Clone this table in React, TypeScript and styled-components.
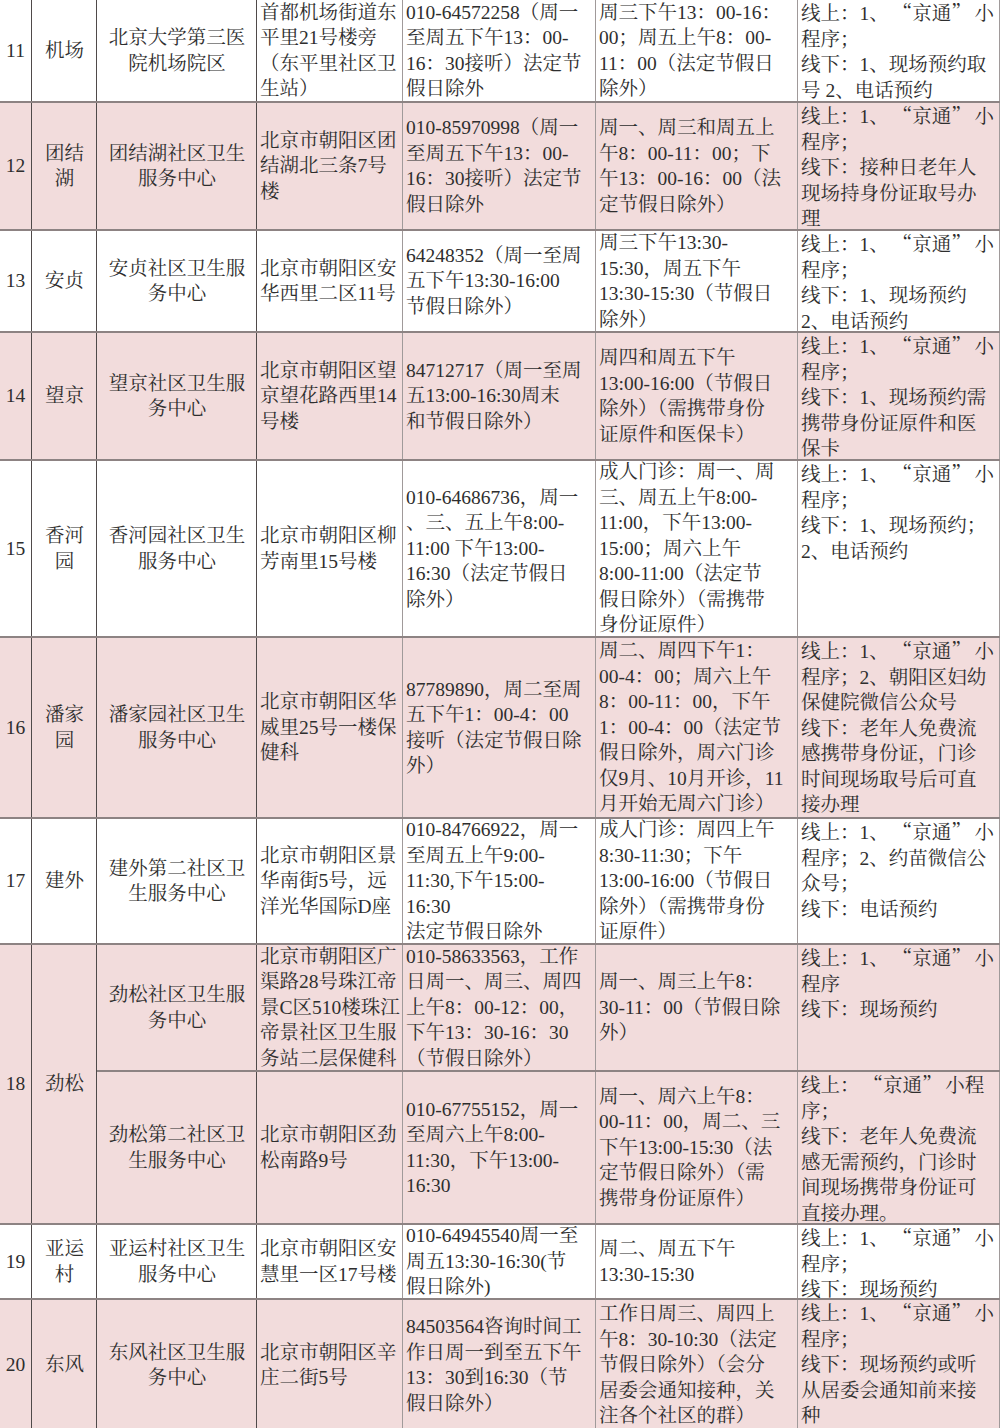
import React from 'react';
import styled, { createGlobalStyle } from 'styled-components';

const GlobalStyle = createGlobalStyle`
	html, body {
		margin: 0;
		padding: 0;
		background: #ffffff;
	}
	body {
		font-family: 'Liberation Serif', 'Noto Serif CJK SC', 'Noto Sans CJK SC', serif;
	}
`;

type Site = {
	name: string;
	addr: string;
	phone: string;
	hours: string;
	method: string;
};

type Area = {
	no: string;
	area: string;
	pink: boolean;
	sites: Site[];
};

// heights of each grid line (row 18 has two sub rows)
const rowHeights = [101, 126, 100, 126, 175, 179, 124, 125, 151, 73, 130];

const areas: Area[] = [
	{
		no: '11',
		area: '机场',
		pink: false,
		sites: [
			{
				name: '北京大学第三医\n院机场院区',
				addr: '首都机场街道东\n平里21号楼旁\n（东平里社区卫\n生站）',
				phone: '010-64572258（周一\n至周五下午13：00-\n16：30接听）法定节\n假日除外',
				hours: '周三下午13：00-16：\n00；周五上午8：00-\n11：00（法定节假日\n除外）',
				method: '线上：1、“京通”小\n程序；\n线下：1、现场预约取\n号 2、电话预约',
			},
		],
	},
	{
		no: '12',
		area: '团结\n湖',
		pink: true,
		sites: [
			{
				name: '团结湖社区卫生\n服务中心',
				addr: '北京市朝阳区团\n结湖北三条7号\n楼',
				phone: '010-85970998（周一\n至周五下午13：00-\n16：30接听）法定节\n假日除外',
				hours: '周一、周三和周五上\n午8：00-11：00；下\n午13：00-16：00（法\n定节假日除外）',
				method: '线上：1、“京通”小\n程序；\n线下：接种日老年人\n现场持身份证取号办\n理',
			},
		],
	},
	{
		no: '13',
		area: '安贞',
		pink: false,
		sites: [
			{
				name: '安贞社区卫生服\n务中心',
				addr: '北京市朝阳区安\n华西里二区11号',
				phone: '64248352（周一至周\n五下午13:30-16:00\n节假日除外）',
				hours: '周三下午13:30-\n15:30，周五下午\n13:30-15:30（节假日\n除外）',
				method: '线上：1、“京通”小\n程序；\n线下：1、现场预约\n2、电话预约',
			},
		],
	},
	{
		no: '14',
		area: '望京',
		pink: true,
		sites: [
			{
				name: '望京社区卫生服\n务中心',
				addr: '北京市朝阳区望\n京望花路西里14\n号楼',
				phone: '84712717（周一至周\n五13:00-16:30周末\n和节假日除外）',
				hours: '周四和周五下午\n13:00-16:00（节假日\n除外）（需携带身份\n证原件和医保卡）',
				method: '线上：1、“京通”小\n程序；\n线下：1、现场预约需\n携带身份证原件和医\n保卡',
			},
		],
	},
	{
		no: '15',
		area: '香河\n园',
		pink: false,
		sites: [
			{
				name: '香河园社区卫生\n服务中心',
				addr: '北京市朝阳区柳\n芳南里15号楼',
				phone: '010-64686736，周一\n、三、五上午8:00-\n11:00 下午13:00-\n16:30（法定节假日\n除外）',
				hours: '成人门诊：周一、周\n三、周五上午8:00-\n11:00，下午13:00-\n15:00；周六上午\n8:00-11:00（法定节\n假日除外）（需携带\n身份证原件）',
				method: '线上：1、“京通”小\n程序；\n线下：1、现场预约；\n2、电话预约',
			},
		],
	},
	{
		no: '16',
		area: '潘家\n园',
		pink: true,
		sites: [
			{
				name: '潘家园社区卫生\n服务中心',
				addr: '北京市朝阳区华\n威里25号一楼保\n健科',
				phone: '87789890，周二至周\n五下午1：00-4：00\n接听（法定节假日除\n外）',
				hours: '周二、周四下午1：\n00-4：00；周六上午\n8：00-11：00，下午\n1：00-4：00（法定节\n假日除外，周六门诊\n仅9月、10月开诊，11\n月开始无周六门诊）',
				method: '线上：1、“京通”小\n程序；2、朝阳区妇幼\n保健院微信公众号\n线下：老年人免费流\n感携带身份证，门诊\n时间现场取号后可直\n接办理',
			},
		],
	},
	{
		no: '17',
		area: '建外',
		pink: false,
		sites: [
			{
				name: '建外第二社区卫\n生服务中心',
				addr: '北京市朝阳区景\n华南街5号，远\n洋光华国际D座',
				phone: '010-84766922，周一\n至周五上午9:00-\n11:30,下午15:00-\n16:30\n法定节假日除外',
				hours: '成人门诊：周四上午\n8:30-11:30；下午\n13:00-16:00（节假日\n除外）（需携带身份\n证原件）',
				method: '线上：1、“京通”小\n程序；2、约苗微信公\n众号；\n线下：电话预约',
			},
		],
	},
	{
		no: '18',
		area: '劲松',
		pink: true,
		sites: [
			{
				name: '劲松社区卫生服\n务中心',
				addr: '北京市朝阳区广\n渠路28号珠江帝\n景C区510楼珠江\n帝景社区卫生服\n务站二层保健科',
				phone: '010-58633563，工作\n日周一、周三、周四\n上午8：00-12：00，\n下午13：30-16：30\n（节假日除外）',
				hours: '周一、周三上午8：\n30-11：00（节假日除\n外）',
				method: '线上：1、“京通”小\n程序\n线下：现场预约',
			},
			{
				name: '劲松第二社区卫\n生服务中心',
				addr: '北京市朝阳区劲\n松南路9号',
				phone: '010-67755152，周一\n至周六上午8:00-\n11:30，下午13:00-\n16:30',
				hours: '周一、周六上午8：\n00-11：00，周二、三\n下午13:00-15:30（法\n定节假日除外）（需\n携带身份证原件）',
				method: '线上：“京通”小程\n序；\n线下：老年人免费流\n感无需预约，门诊时\n间现场携带身份证可\n直接办理。',
			},
		],
	},
	{
		no: '19',
		area: '亚运\n村',
		pink: false,
		sites: [
			{
				name: '亚运村社区卫生\n服务中心',
				addr: '北京市朝阳区安\n慧里一区17号楼',
				phone: '010-64945540周一至\n周五13:30-16:30(节\n假日除外)',
				hours: '周二、周五下午\n13:30-15:30',
				method: '线上：1、“京通”小\n程序；\n线下：现场预约',
			},
		],
	},
	{
		no: '20',
		area: '东风',
		pink: true,
		sites: [
			{
				name: '东风社区卫生服\n务中心',
				addr: '北京市朝阳区辛\n庄二街5号',
				phone: '84503564咨询时间工\n作日周一到至五下午\n13：30到16:30（节\n假日除外）',
				hours: '工作日周三、周四上\n午8：30-10:30（法定\n节假日除外）（会分\n居委会通知接种，关\n注各个社区的群）',
				method: '线上：1、“京通”小\n程序；\n线下：现场预约或听\n从居委会通知前来接\n种',
			},
		],
	},
];

const Table = styled.div`
	display: grid;
	grid-template-columns: 32px 65px 160px 146px 193px 202px 202px;
	grid-template-rows: ${rowHeights.map((h) => `${h}px`).join(' ')};
	row-gap: 2px;
	width: 1000px;
	background: #8d8383;
	font-size: 19.5px;
	line-height: 25.5px;
	color: #2e2e2e;
`;

const Cell = styled.div<{
	$pink: boolean;
	$align?: 'left' | 'center';
	$top?: boolean;
	$span?: number;
	$dark?: boolean;
}>`
	display: flex;
	flex-direction: column;
	justify-content: ${(p) => (p.$top ? 'flex-start' : 'center')};
	align-items: ${(p) => (p.$align === 'center' ? 'center' : 'flex-start')};
	text-align: ${(p) => p.$align || 'left'};
	grid-row: ${(p) => (p.$span ? `span ${p.$span}` : 'auto')};
	padding: 0 2px 0 3px;
	box-sizing: border-box;
	background: ${(p) => (p.$pink ? '#f2dcdc' : '#ffffff')};
	border-right: 1px solid ${(p) => (p.$dark ? '#4f4a4a' : '#a09a9a')};
	min-width: 0;
`;

const NoCell = styled(Cell)`
	padding: 0;
`;

const Lines = styled.div`
	white-space: pre;
`;

// full-width curly quotes, as in the Song typeface of the source
const Quote = styled.span<{ $open: boolean }>`
	display: inline-block;
	width: 1.2em;
	text-align: ${(p) => (p.$open ? 'right' : 'left')};
	font-family: 'Noto Serif CJK SC', 'Noto Sans CJK SC', serif;
`;

const renderText = (text: string) =>
	text.split(/([“”])/).map((part, i) =>
		part === '“' || part === '”' ? (
			<Quote key={i} $open={part === '“'}>
				{part}
			</Quote>
		) : (
			<React.Fragment key={i}>{part}</React.Fragment>
		)
	);

const App: React.FC = () => {
	return (
		<>
			<GlobalStyle />
			<Table>
				{areas.map((a) => (
					<React.Fragment key={a.no}>
						<NoCell $pink={a.pink} $align='center' $dark $span={a.sites.length}>
							<Lines>{a.no}</Lines>
						</NoCell>
						<Cell $pink={a.pink} $align='center' $dark $span={a.sites.length}>
							<Lines>{a.area}</Lines>
						</Cell>
						{a.sites.map((s, i) => (
							<React.Fragment key={i}>
								<Cell $pink={a.pink} $align='center' $dark>
									<Lines>{s.name}</Lines>
								</Cell>
								<Cell $pink={a.pink}>
									<Lines>{s.addr}</Lines>
								</Cell>
								<Cell $pink={a.pink}>
									<Lines>{s.phone}</Lines>
								</Cell>
								<Cell $pink={a.pink}>
									<Lines>{s.hours}</Lines>
								</Cell>
								<Cell $pink={a.pink} $top>
									<Lines>{renderText(s.method)}</Lines>
								</Cell>
							</React.Fragment>
						))}
					</React.Fragment>
				))}
			</Table>
		</>
	);
};

export default App;
